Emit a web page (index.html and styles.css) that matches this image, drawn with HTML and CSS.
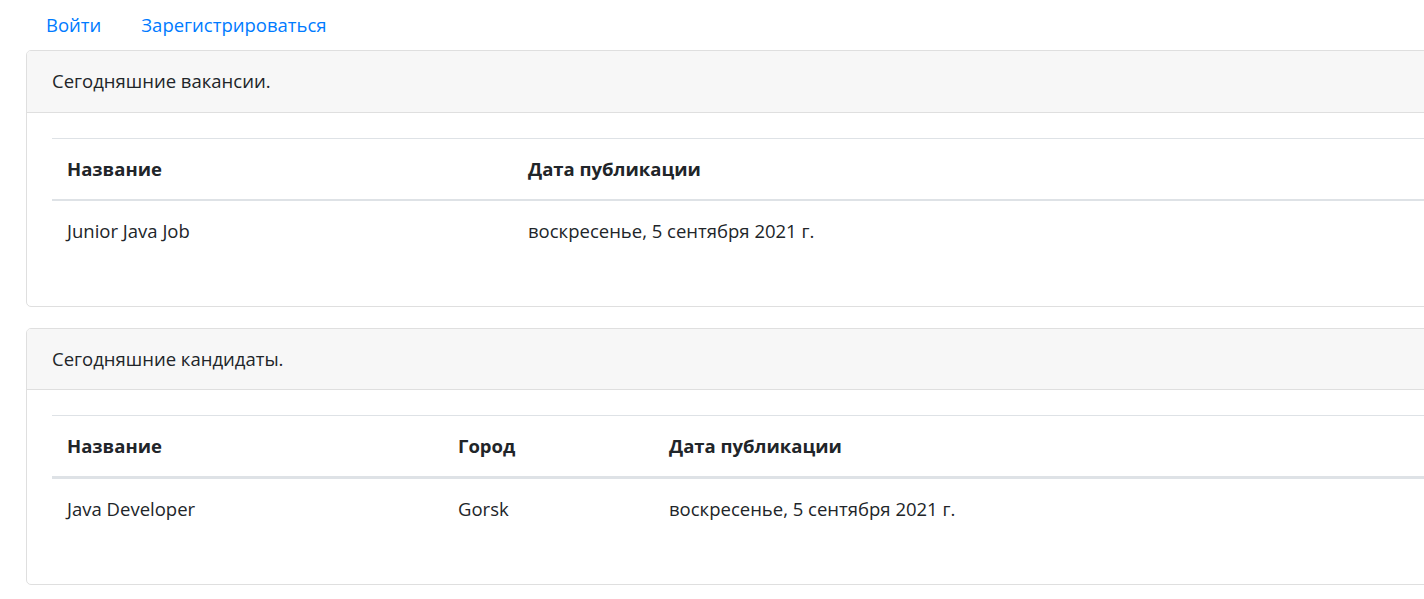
FILE: index.html
```html
<!DOCTYPE html>
<html lang="ru">
<head>
<meta charset="utf-8">
<title>Работа</title>
<link rel="stylesheet" href="styles.css">
</head>
<body>
<div class="page">
  <ul class="nav">
    <li><a class="nav-link" href="#">Войти</a></li>
    <li><a class="nav-link" href="#">Зарегистрироваться</a></li>
  </ul>
  <div class="card">
    <div class="card-header">Сегодняшние вакансии.</div>
    <div class="card-body">
      <table class="table">
        <thead>
          <tr>
            <th class="col-a1">Название</th>
            <th>Дата публикации</th>
          </tr>
        </thead>
        <tbody>
          <tr>
            <td>Junior Java Job</td>
            <td>воскресенье, 5 сентября 2021 г.</td>
          </tr>
        </tbody>
      </table>
    </div>
  </div>
  <div class="card card-next">
    <div class="card-header card-header-even">Сегодняшние кандидаты.</div>
    <div class="card-body">
      <table class="table table-thick">
        <thead>
          <tr>
            <th class="col-b1">Название</th>
            <th class="col-b2">Город</th>
            <th>Дата публикации</th>
          </tr>
        </thead>
        <tbody>
          <tr>
            <td>Java Developer</td>
            <td>Gorsk</td>
            <td>воскресенье, 5 сентября 2021 г.</td>
          </tr>
        </tbody>
      </table>
    </div>
  </div>
</div>
</body>
</html>
```
FILE: styles.css
```css
html, body {
  margin: 0;
  padding: 0;
  overflow: hidden;
}
body {
  font-family: "Open Sans", "Noto Sans", sans-serif;
  font-size: 18.5px;
  line-height: 30px;
  color: #212529;
  background: #fff;
}
.page {
  padding-left: 26px;
  width: 1600px;
}
.nav {
  display: flex;
  list-style: none;
  margin: 0;
  padding: 0;
}
.nav-link {
  display: block;
  padding: 10px 20px;
  color: #007bff;
  text-decoration: none;
}
.card {
  border: 1px solid #dfdfdf;
  border-radius: 5px;
  background: #fff;
}
.card-next {
  margin-top: 21px;
}
.card-header {
  padding: 15px 25px 16px;
  background: #f7f7f7;
  border-bottom: 1px solid #dfdfdf;
  border-radius: 4px 4px 0 0;
}
.card-header-even {
  padding-bottom: 15px;
}
.card-body {
  padding: 25px;
}
.table {
  width: 100%;
  border-collapse: collapse;
  margin-bottom: 20px;
}
.table th,
.table td {
  padding: 15px;
  text-align: left;
  vertical-align: top;
}
.table th {
  font-weight: 700;
  border-top: 1px solid #dee2e6;
  border-bottom: 2px solid #dee2e6;
}
.table-thick th {
  border-bottom-width: 3px;
}
.col-a1 { width: 431px; }
.col-b1 { width: 361px; }
.col-b2 { width: 181px; }
```
